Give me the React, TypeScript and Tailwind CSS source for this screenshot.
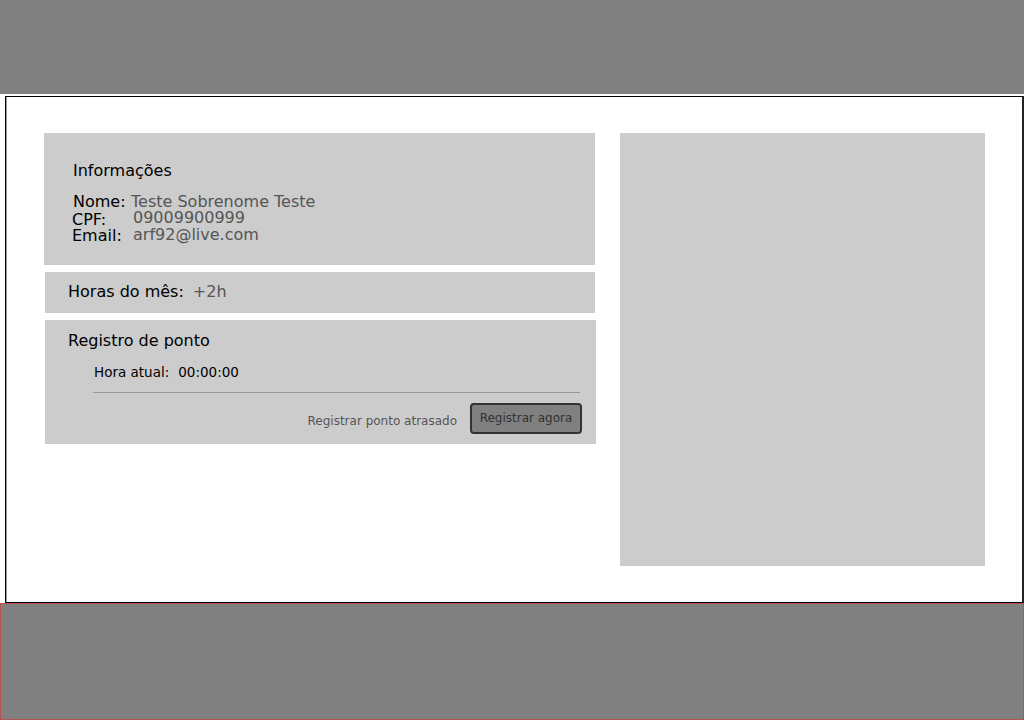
import React from "react";

export default function App() {
  const font = { fontFamily: '"DejaVu Sans", "Liberation Sans", sans-serif' };
  return (
    <div className="w-[1024px] h-[720px] flex flex-col bg-white overflow-hidden" style={font}>
      {/* top bar */}
      <div className="h-[94px] shrink-0 bg-[#808080]" />
      <div className="h-[2px] shrink-0" />
      {/* main panel */}
      <div className="ml-[5px] h-[507px] shrink-0 border border-black border-r-2 border-r-[#222] flex">
        <div className="w-px bg-[#9a9a9a]" />
        <div className="flex flex-1 pl-[37px] pt-[36px]">
          {/* left column */}
          <div className="w-[552px] flex flex-col">
            {/* Informações */}
            <div className="w-[551px] h-[132px] bg-[#cccccc] pl-[29px] flex flex-col">
              <div className="mt-[28px] text-[16px] leading-[19px] text-black">Informações</div>
              <div className="mt-[15px] flex items-start text-[16px] leading-[14px]">
                <span className="w-[58px] text-black">Nome:</span>
                <span className="text-[#555555]">Teste Sobrenome Teste</span>
              </div>
              <div className="mt-[4px] -ml-px flex items-start text-[16px] leading-[14px]">
                <span className="w-[61px] text-black">CPF:</span>
                <span className="-mt-[2px] text-[#555555]">09009900999</span>
              </div>
              <div className="mt-[2px] -ml-px flex items-start text-[16px] leading-[14px]">
                <span className="w-[61px] text-black">Email:</span>
                <span className="-mt-[1px] text-[#555555]">arf92@live.com</span>
              </div>
            </div>
            {/* Horas do mês */}
            <div className="mt-[7px] ml-px w-[550px] h-[41px] bg-[#cccccc] pl-[23px] flex items-center text-[16px] leading-[18px]">
              <span className="-mt-[2px] text-black">Horas do mês:</span>
              <span className="-mt-[2px] ml-[9px] text-[#555555]">+2h</span>
            </div>
            {/* Registro de ponto */}
            <div className="mt-[7px] ml-px w-[551px] h-[124px] bg-[#cccccc] flex flex-col">
              <div className="mt-[11px] pl-[23px] text-[16px] leading-[19px] text-black">Registro de ponto</div>
              <div className="mt-[14px] pl-[49px] flex text-[13.5px] leading-[16px] text-black">
                <span>Hora atual:</span>
                <span className="ml-[9px]">00:00:00</span>
              </div>
              <div className="mt-[12px] ml-[48px] mr-[16px] border-t border-[#999999]" />
              <div className="mt-[10px] mr-[14px] flex justify-end items-center">
                <span className="pt-[4px] text-[12px] text-[#555555]">Registrar ponto atrasado</span>
                <button className="ml-[13px] w-[112px] h-[31px] rounded-[4px] border-2 border-[#333333] bg-[#808080] text-[12px] text-[#333333] leading-[14px] pb-[2px]">
                  Registrar agora
                </button>
              </div>
            </div>
          </div>
          {/* right panel */}
          <div className="ml-[24px] w-[365px] h-[433px] bg-[#cccccc]" />
        </div>
      </div>
      {/* bottom bar */}
      <div className="flex-1 bg-[#808080] border border-[#b85450]" />
    </div>
  );
}
